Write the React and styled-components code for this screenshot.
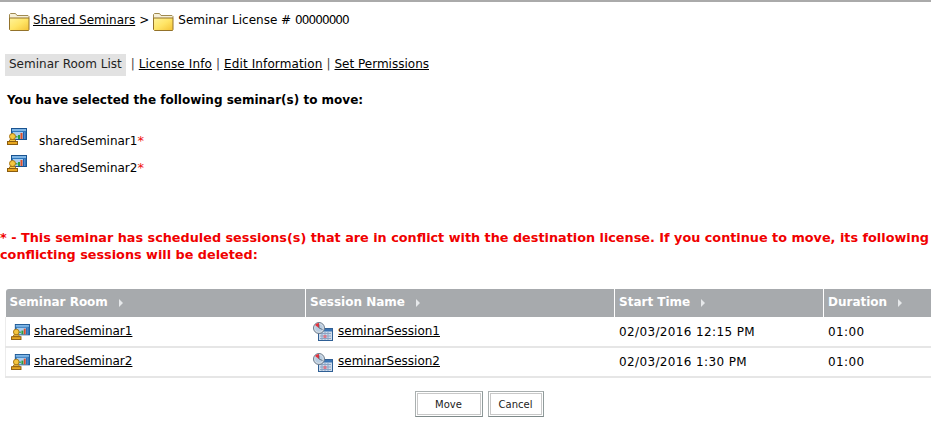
import React from "react";
import styled, { createGlobalStyle } from "styled-components";

const Global = createGlobalStyle`
  html, body { margin: 0; padding: 0; background: #fff; overflow: hidden; }
  body { font-family: "DejaVu Sans", Verdana, sans-serif; font-size: 12px; color: #000; }
`;
const Page = styled.div`
  width: 931px; height: 423px; box-sizing: border-box; overflow: hidden;
  border-top: 2px solid #aaa; display: flex; flex-direction: column;
`;
const Crumbs = styled.div`
  display: flex; align-items: center; height: 24px; margin-top: 8px; padding-left: 9px; line-height: 20px;
`;
const CrumbLink = styled.a`
  color: #000; text-decoration: underline; margin-left: 3px; position: relative; top: -2px;
`;
const CrumbText = styled.span`
  margin-left: 4px; position: relative; top: -2px; white-space: pre;
`;
const Digits = styled.span`
  letter-spacing: -0.9px;
`;
const Sep = styled.span`
  margin: 0 4px 0 4px; position: relative; top: -2px;
`;
const Tabs = styled.div`
  display: flex; align-items: flex-start; height: 22px; line-height: 20px; margin-top: 20px; padding-left: 5px;
`;
const ActiveTab = styled.span`
  background: #e2e2e2; height: 22px; padding: 0 4px; margin-right: 5px; color: #222;
`;
const TabLink = styled.a`
  color: #000; text-decoration: underline; letter-spacing: ${p => p.$ls || 0}px;
`;
const Pipe = styled.span`
  color: #444; margin: 0 4px 0 ${p => p.$first ? 0 : 4}px;
`;
const Heading = styled.div`
  font-weight: bold; font-size: 12px; margin: 16px 0 0 7px; line-height: 16px;
`;
const SelectedList = styled.div`
  margin: 20px 0 0 7px; display: flex; flex-direction: column; gap: 7px;
`;
const SelectedRow = styled.div`
  display: flex; height: 20px;
`;
const SelectedName = styled.span`
  margin-left: 12px; margin-top: 5px; line-height: 16px;
`;
const Star = styled.span` color: #f01010; font-size: 13px; line-height: 0; `;
const Warning = styled.div`
  color: #f00000; font-weight: bold; font-size: 12.8px; line-height: 17px; white-space: nowrap;
  margin: 54px 0 0 0;
`;
const Table = styled.table`
  border-collapse: collapse; table-layout: fixed; width: 939px; margin: 26px 0 0 5px;
`;
const HeadCell = styled.th`
  background: #a7aaad; color: #fff; text-align: left; height: 28px; padding: 0 4px 3px;
  font-size: 12px; font-weight: bold; border-left: 1px solid #fff; border-right: 1px solid #fff;
  box-sizing: border-box; white-space: nowrap;
  &:first-child { border-left: 0; border-top-left-radius: 3px; }
`;
const Arrow = styled.span`
  display: inline-block; width: 0; height: 0; margin-left: 11px;
  border-left: 4px solid #e6e8ea; border-top: 4px solid transparent; border-bottom: 4px solid transparent;
  vertical-align: -1px;
`;
const Cell = styled.td`
  height: 30px; box-sizing: border-box; padding: 0 4px; border-bottom: 2px solid #e6e6e6;
  border-left: 1px solid #ececec; white-space: nowrap;
  border-right: 1px solid #fff; letter-spacing: ${p => p.$ls || 0}px;
`;
const CellInner = styled.div`
  display: flex; align-items: center; gap: ${p => p.$gap}px; padding-left: ${p => p.$pad}px;
`;
const CellLink = styled.a`
  color: #000; text-decoration: underline; position: relative; top: -1px;
`;
const Buttons = styled.div`
  display: flex; justify-content: center; gap: 5px; margin-top: 13px; padding-left: 27px;
`;
const Button = styled.button`
  width: ${p => p.$w}px; height: 26px; background: #fff; font: 10px "DejaVu Sans", Verdana, sans-serif; color: #222;
  border: 1px solid #aab0b0; border-bottom-color: #7f8a8a; border-right-color: #8f9a9a;
  outline: 1px solid #c8c8c8; outline-offset: -3px; padding: 0;
`;

const Folder = () => (
  <svg width="21" height="18" viewBox="0 0 21 18">
    <defs>
      <linearGradient id="fg" x1="0" y1="0" x2="1" y2="1">
        <stop offset="0" stopColor="#fff39a" /><stop offset="0.5" stopColor="#ffe566" /><stop offset="1" stopColor="#f4c235" />
      </linearGradient>
    </defs>
    <path d="M.5 16V1.5l1-1h5l1.5 2h11l1 1V5" fill="#f6f0d8" stroke="#a08a50" />
    <path d="M.5 5h19.5v11.5l-.5 1H1.5l-1-1z" fill="url(#fg)" stroke="#93722a" />
  </svg>
);
const Room = ({ w = 20, h = 17 }) => (
  <svg width={w} height={h} viewBox="0 0 20 17">
    <rect x="4.5" y=".5" width="15" height="11" fill="#2f78bc" stroke="#1a5390" />
    <rect x="5" y="1" width="14" height="2" fill="#7fb6e6" />
    <rect x="6" y="4" width="12" height="7" fill="#a9cdee" />
    <rect x="11" y="7" width="2" height="4" fill="#2f9f3f" />
    <rect x="13.5" y="5" width="2" height="6" fill="#e0502a" />
    <rect x="16" y="4" width="1.6" height="7" fill="#1f5fb0" />
    <rect x="7.5" y="8" width="3" height="1.5" fill="#40b050" />
    <circle cx="5.5" cy="8.5" r="3" fill="#f5c63e" stroke="#a87516" />
    <path d="M2 13.5l1-2h5l1 2z" fill="#f4c84a" stroke="#a87516" />
    <rect x=".5" y="13.5" width="10" height="3" fill="#e8a71f" stroke="#8a5c10" />
  </svg>
);
const Session = () => (
  <svg width="20" height="19" viewBox="0 0 20 19">
    <rect x="5.5" y="6.5" width="14" height="12" fill="#cfdcec" stroke="#2f5f95" />
    <rect x="6" y="7" width="13" height="2.5" fill="#3a74b4" />
    <path d="M7 11.5h11M7 14h11M7 16.5h11M9 10v8M12 10v8M15 10v8" stroke="#8aa4c4" strokeWidth="1" />
    <rect x="10.5" y="13" width="3" height="3" fill="#d9788a" />
    <circle cx="6" cy="6" r="5.5" fill="#d4dde6" stroke="#6a7a8c" />
    <circle cx="6" cy="6" r="3.8" fill="#b8cce0" />
    <path d="M6 6V1A5 5 0 0 0 2 3z" fill="#e8303a" />
    <path d="M6 6V2.5M6 6L9.5 7.5" stroke="#55606c" strokeWidth=".8" />
  </svg>
);

const rows = [
  ["sharedSeminar1", "seminarSession1", "02/03/2016 12:15 PM", "01:00"],
  ["sharedSeminar2", "seminarSession2", "02/03/2016 1:30 PM", "01:00"],
];

export default function App() {
  return (
    <>
      <Global />
      <Page>
        <Crumbs>
          <Folder /><CrumbLink href="#">Shared Seminars</CrumbLink>
          <Sep>&gt;</Sep>
          <Folder /><CrumbText>Seminar License # <Digits>00000000</Digits></CrumbText>
        </Crumbs>
        <Tabs>
          <ActiveTab>Seminar Room List</ActiveTab>
          <Pipe $first>|</Pipe><TabLink href="#" $ls={0.12}>License Info</TabLink>
          <Pipe>|</Pipe><TabLink href="#" $ls={0.12}>Edit Information</TabLink>
          <Pipe>|</Pipe><TabLink href="#">Set Permissions</TabLink>
        </Tabs>
        <Heading>You have selected the following seminar(s) to move:</Heading>
        <SelectedList>
          {rows.map(r => (
            <SelectedRow key={r[0]}>
              <Room />
              <SelectedName>{r[0]}<Star>*</Star></SelectedName>
            </SelectedRow>
          ))}
        </SelectedList>
        <Warning>
          * - This seminar has scheduled sessions(s) that are in conflict with the destination license. If you continue to move, its following<br />
          conflicting sessions will be deleted:
        </Warning>
        <Table>
          <colgroup>
            <col style={{ width: 300 }} /><col style={{ width: 309 }} /><col style={{ width: 209 }} /><col style={{ width: 121 }} />
          </colgroup>
          <thead>
            <tr>
              {["Seminar Room", "Session Name", "Start Time", "Duration"].map(h => (
                <HeadCell key={h}>{h}<Arrow /></HeadCell>
              ))}
            </tr>
          </thead>
          <tbody>
            {rows.map(r => (
              <tr key={r[0]}>
                <Cell><CellInner $pad={1} $gap={4}><Room w={19} h={16} /><CellLink href="#">{r[0]}</CellLink></CellInner></Cell>
                <Cell><CellInner $pad={3} $gap={5}><Session /><CellLink href="#">{r[1]}</CellLink></CellInner></Cell>
                <Cell $ls={0.37}>{r[2]}</Cell>
                <Cell $ls={0.37}>{r[3]}</Cell>
              </tr>
            ))}
          </tbody>
        </Table>
        <Buttons>
          <Button $w={68}>Move</Button>
          <Button $w={56}>Cancel</Button>
        </Buttons>
      </Page>
    </>
  );
}
